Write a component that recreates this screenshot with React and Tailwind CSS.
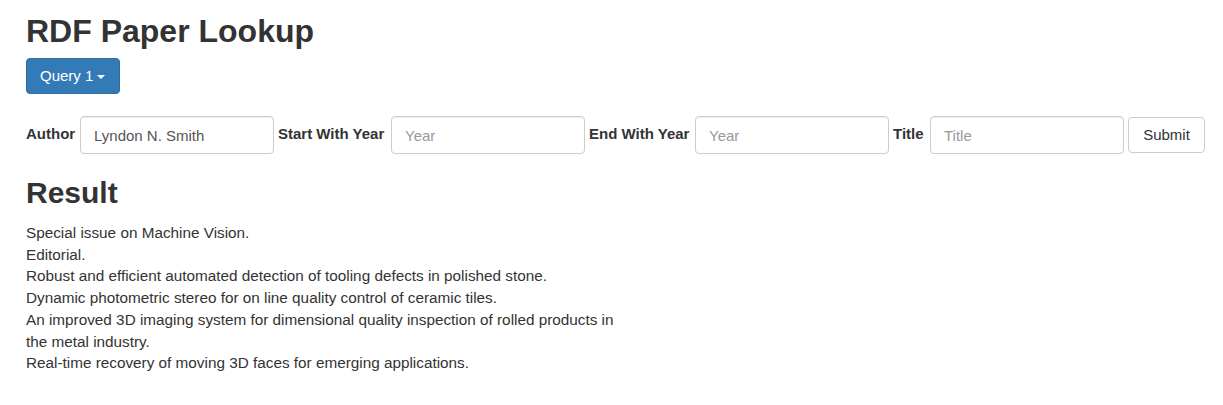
import React from "react";

const font = { fontFamily: '"Liberation Sans", Arial, Helvetica, sans-serif' };

function Field({ label, labelClass, value, placeholder, inputClass }) {
  return (
    <>
      <label className={"text-[15px] font-bold text-[#333] leading-[21px] mb-[3px] whitespace-nowrap " + labelClass}>{label}</label>
      <input
        type="text"
        defaultValue={value}
        placeholder={placeholder}
        className={"h-[38px] px-[13px] rounded-[4px] border border-[#ccc] bg-white text-[15px] text-[#555] placeholder:text-[#999] shadow-[inset_0_1px_1px_rgba(0,0,0,0.075)] outline-none " + inputClass}
      />
    </>
  );
}

const results = [
  "Special issue on Machine Vision.",
  "Editorial.",
  "Robust and efficient automated detection of tooling defects in polished stone.",
  "Dynamic photometric stereo for on line quality control of ceramic tiles.",
  "An improved 3D imaging system for dimensional quality inspection of rolled products in the metal industry.",
  "Real-time recovery of moving 3D faces for emerging applications.",
];

export default function App() {
  return (
    <div className="min-h-[405px] bg-white text-[#333] pl-[26px] pt-[13px]" style={font}>
      <h1 className="text-[32px] font-bold leading-[36px] text-[#333]">RDF Paper Lookup</h1>
      <button className="mt-[9px] h-[36px] w-[94px] pl-[13px] pr-[13px] flex items-center rounded-[4px] border border-[#2e6da4] bg-[#337ab7] text-white text-[15px]">
        <span>Query 1</span>
        <span className="ml-[4px] w-0 h-0 border-l-[4.5px] border-r-[4.5px] border-t-[4.5px] border-l-transparent border-r-transparent border-t-white mt-[2px]"></span>
      </button>
      <form className="mt-[22px] flex items-center gap-[4px]" onSubmit={(e) => e.preventDefault()}>
        <Field label="Author" labelClass="w-[50px]" inputClass="w-[194px]" value="Lyndon N. Smith" />
        <Field label="Start With Year" labelClass="w-[109px]" inputClass="w-[194px]" placeholder="Year" />
        <Field label="End With Year" labelClass="w-[102px]" inputClass="w-[194px]" placeholder="Year" />
        <Field label="Title" labelClass="w-[33px]" inputClass="w-[194px]" placeholder="Title" />
        <button type="submit" className="h-[36px] w-[77px] rounded-[4px] border border-[#ccc] bg-white text-[15px] text-[#333]">
          Submit
        </button>
      </form>
      <h2 className="mt-[22px] text-[30px] font-bold leading-[33px] text-[#333]">Result</h2>
      <div className="mt-[13px] max-w-[602px] text-[15.3px] leading-[21.7px] text-[#333]">
        {results.map((r) => (
          <div key={r}>{r}</div>
        ))}
      </div>
    </div>
  );
}
